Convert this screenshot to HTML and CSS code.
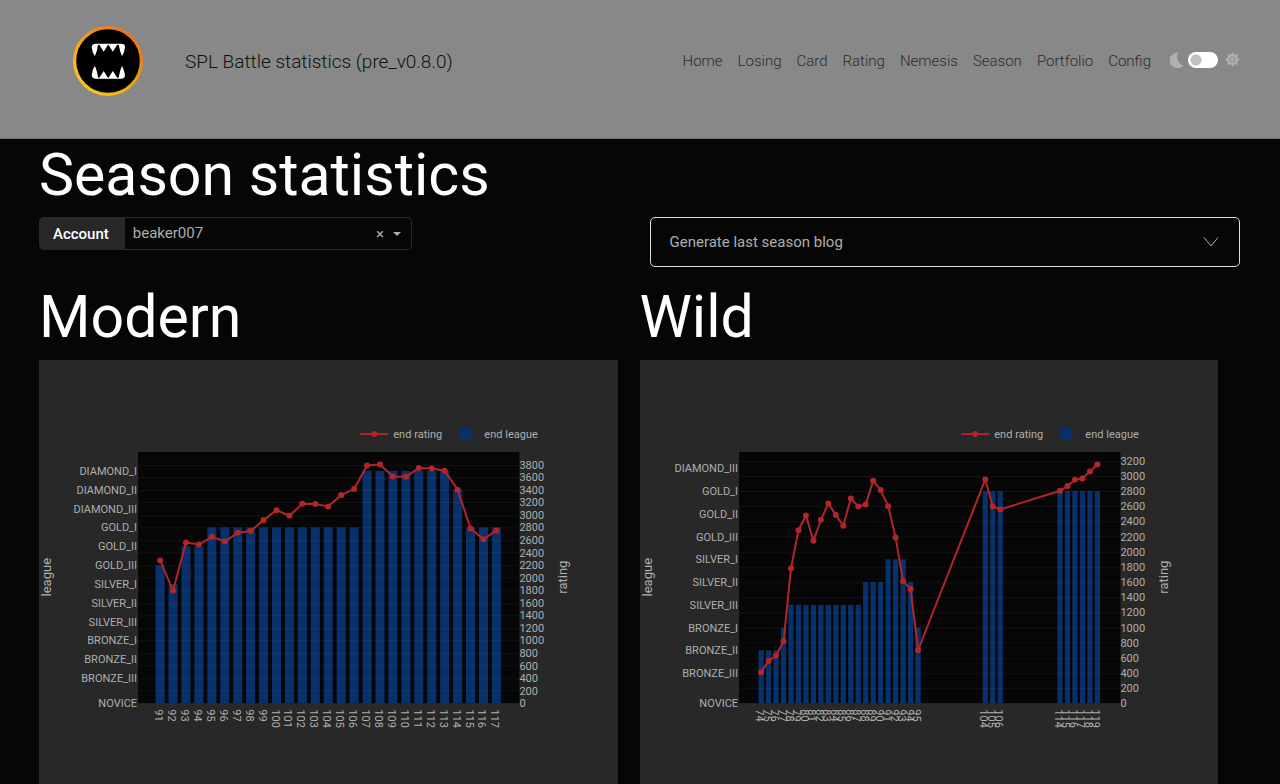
FILE: index.html
```html
<!DOCTYPE html>
<html lang="en">
<head>
<meta charset="utf-8">
<meta name="viewport" content="width=device-width, initial-scale=1">
<title>SPL Battle statistics</title>
<link rel="stylesheet" href="styles.css">
</head>
<body>
<header class="topbar">
  <svg class="logo" viewBox="0 0 70 70" aria-hidden="true">
    <defs>
      <linearGradient id="ring" x1="0.1" y1="0.9" x2="0.8" y2="0.1">
        <stop offset="0" stop-color="#fdca14"/>
        <stop offset="1" stop-color="#e9781c"/>
      </linearGradient>
    </defs>
    <circle cx="35" cy="35" r="33.4" fill="#000" stroke="url(#ring)" stroke-width="3.2"/>
    <path fill="#fff" d="M18.700 21Q19 17.700 23 17.700H48Q52 17.700 52 21Q51.500 26 49 30.300Q47 26 45.800 19L44.200 18.700L39.800 25.700L35.500 18.700H35L30.700 25.700L26.300 18.700L25 19Q24 26 21.800 30.300Q19 26 18.700 21Z"/>
    <path fill="#fff" d="M18.700 49.300Q19 52.700 23 52.700H48Q52 52.700 52 49.300Q51.500 44 49 40Q47 44 45.800 51.400L44.200 51.700L39.800 45L35.500 51.700H35L30.700 45L26.300 51.700L25 51.400Q24 44 21.800 40Q19 44 18.700 49.300Z"/>
  </svg>
  <span class="brand">SPL Battle statistics (pre_v0.8.0)</span>
  <nav class="nav">
    <a href="#">Home</a>
    <a href="#">Losing</a>
    <a href="#">Card</a>
    <a href="#">Rating</a>
    <a href="#">Nemesis</a>
    <a href="#">Season</a>
    <a href="#">Portfolio</a>
    <a href="#">Config</a>
  </nav>
  <div class="theme">
    <svg class="moon" viewBox="0 0 16 18" aria-hidden="true"><path d="M9.500 0.500A9 9 0 1 0 15.500 15.200A10 10 0 0 1 9.500 0.500Z"/></svg>
    <input class="switch" type="checkbox" role="switch" aria-label="Light theme">
    <svg class="sun" viewBox="0 0 16 16" aria-hidden="true"><path fill-rule="evenodd" d="M8 0L9.700 2.900L13.300 2.200L13 5.800L16 8L13 10.200L13.300 13.800L9.700 13.100L8 16L6.300 13.100L2.700 13.800L3 10.200L0 8L3 5.800L2.700 2.200L6.300 2.900ZM8 4.700A3.300 3.300 0 1 0 8 11.300A3.300 3.300 0 1 0 8 4.700Z"/><circle cx="8" cy="8" r="2.400"/></svg>
  </div>
</header>

<main class="page">
  <h1 class="heading">Season statistics</h1>
  <div class="columns controls">
    <div class="account">
      <label class="account-label" for="account">Account</label>
      <div class="account-box">
        <select class="account-select" id="account"><option>beaker007</option></select>
        <button class="clear" type="button" aria-label="Clear account">×</button>
        <svg class="caret" viewBox="0 0 8 4" aria-hidden="true"><path d="M0 0H8L4 4Z"/></svg>
      </div>
    </div>
    <button class="accordion" type="button" aria-expanded="false">
      <span>Generate last season blog</span>
      <svg class="chevron" viewBox="0 0 16 16" aria-hidden="true"><path d="M1 3.500L8 12L15 3.500"/></svg>
    </button>
  </div>
  <div class="columns">
    <section>
      <h2 class="heading">Modern</h2>
      <div class="panel"><svg class="chart" id="modern" viewBox="0 0 578 450" role="img" aria-label="Modern rating and league per season"></svg></div>
    </section>
    <section>
      <h2 class="heading">Wild</h2>
      <div class="panel"><svg class="chart" id="wild" viewBox="0 0 578 450" role="img" aria-label="Wild rating and league per season"></svg></div>
    </section>
  </div>
</main>
<script src="charts.js"></script>
</body>
</html>
```

FILE: styles.css
```css
* { box-sizing: border-box; }

body {
  margin: 0;
  background: #060606;
  color: #fff;
  font-family: Roboto, "Liberation Sans", sans-serif;
  font-size: 15px;
}

.topbar {
  display: flex;
  align-items: center;
  padding: 26px 40px 42px 73px;
  background: #888;
  border-bottom: 1px solid #777;
}
.logo { width: 70px; height: 70px; flex: none; }
.brand { margin-left: 42px; color: #111; font-size: 19px; font-weight: 300; }
.nav { display: flex; gap: 15px; margin-left: auto; }
.nav a { color: #2c2c2c; font-weight: 300; text-decoration: none; }

.theme { display: flex; align-items: center; gap: 4px; margin-left: 19px; padding-bottom: 3px; }
.theme svg { fill: #b0b0b0; }
.moon { width: 14px; height: 16px; }
.sun { width: 15px; height: 15px; margin-left: 3px; }
.switch {
  appearance: none;
  width: 30px;
  height: 16px;
  margin: 0;
  border-radius: 8px;
  background: radial-gradient(circle at 8px 8px, #c0c0c0 5px, #fff 6px);
}

.page { padding: 0 40px 0 39px; }
.heading { margin: 0; font-size: 59px; line-height: 72px; font-weight: 400; }
.columns { display: grid; grid-template-columns: 1fr 1fr; }
.controls { align-items: start; margin: 6px 0 14px; }

.account { display: flex; width: 373px; height: 33px; }
.account-label {
  display: flex;
  align-items: center;
  padding: 0 15px 0 14px;
  background: #282828;
  border-radius: 5px 0 0 5px;
  font-weight: 500;
}
.account-box {
  display: flex;
  flex: 1;
  align-items: center;
  padding: 0 10px 0 8px;
  border: 1px solid #282828;
  border-radius: 0 4px 4px 0;
}
.account-select {
  appearance: none;
  flex: 1;
  padding: 0 0 2px;
  border: 0;
  background: transparent;
  color: #adafae;
  font: inherit;
}
.clear {
  padding: 0 9px;
  border: 0;
  background: none;
  color: #adafae;
  font: inherit;
}
.caret { width: 8px; height: 4px; fill: #adafae; }

.accordion {
  display: flex;
  align-items: center;
  justify-content: space-between;
  height: 50px;
  margin-left: 10px;
  padding: 0 20px 0 19px;
  border: 1px solid #ddd;
  border-radius: 5px;
  background: transparent;
  color: #adafae;
  font: inherit;
}
.chevron { width: 16px; height: 16px; fill: none; stroke: #adafae; }

.panel { margin: 7px 22px 0 0; background: #282828; }
.chart { display: block; width: 100%; fill: #adafae; font-size: 11px; }
.chart .plot { fill: #060606; }
.chart .grid { stroke: #fff; stroke-opacity: 0.05; }
.chart .bar { fill: #08306b; }
.chart .line { fill: none; stroke: #b0262a; stroke-width: 2; }
.chart .dot { fill: #b0262a; }
.chart .axis-title { font-size: 13px; text-anchor: middle; }
.chart .league { text-anchor: end; }
```

FILE: charts.js
```js
const LEAGUES = ['BRONZE_III', 'BRONZE_II', 'BRONZE_I', 'SILVER_III', 'SILVER_II', 'SILVER_I',
  'GOLD_III', 'GOLD_II', 'GOLD_I', 'DIAMOND_III', 'DIAMOND_II', 'DIAMOND_I'];
const PLOT = { left: 99, right: 480, top: 92, bottom: 343 };

function node(parent, name, attrs, text) {
  const el = document.createElementNS('http://www.w3.org/2000/svg', name);
  for (const key in attrs) el.setAttribute(key, attrs[key]);
  if (text !== undefined) el.textContent = text;
  parent.appendChild(el);
}

// rows: [season, end rating, league threshold]
function draw(id, rows, topTick, topLeague, perPoint) {
  const svg = document.getElementById(id);
  const first = rows[0][0];
  const step = 336 / (rows[rows.length - 1][0] - first);
  const x = season => 121 + (season - first) * step;
  const y = value => PLOT.bottom - value * perPoint;

  node(svg, 'rect', { class: 'plot', x: PLOT.left, y: PLOT.top, width: PLOT.right - PLOT.left, height: PLOT.bottom - PLOT.top });
  for (const [season, , league] of rows) {
    node(svg, 'rect', { class: 'bar', x: x(season) - step * 0.35, y: y(league), width: step * 0.7, height: league * perPoint });
  }
  for (let v = 0; v <= topTick; v += 200) {
    node(svg, 'path', { class: 'grid', d: `M${PLOT.left} ${Math.round(y(v)) + 0.5}H${PLOT.right}` });
    node(svg, 'text', { x: PLOT.right, y: y(v) + 4 }, v);
  }
  node(svg, 'text', { class: 'league', x: PLOT.left - 1, y: y(0) + 4 }, 'NOVICE');
  for (let i = 0; i <= topLeague; i++) {
    node(svg, 'text', { class: 'league', x: PLOT.left - 1, y: y(400 + 300 * i) + 4 }, LEAGUES[i]);
  }
  node(svg, 'polyline', { class: 'line', points: rows.map(r => `${x(r[0])},${y(r[1])}`).join(' ') });
  for (const [season, rating] of rows) {
    node(svg, 'circle', { class: 'dot', cx: x(season), cy: y(rating), r: 3 });
    node(svg, 'text', { transform: `translate(${x(season) - 5} 349) rotate(90)` }, season);
  }

  node(svg, 'path', { class: 'line', d: 'M321 74H349' });
  node(svg, 'circle', { class: 'dot', cx: 335, cy: 74, r: 3 });
  node(svg, 'text', { x: 354, y: 78 }, 'end rating');
  node(svg, 'rect', { class: 'bar', x: 420, y: 68, width: 12, height: 12 });
  node(svg, 'text', { x: 445, y: 78 }, 'end league');
  node(svg, 'text', { class: 'axis-title', transform: 'translate(12 217) rotate(-90)' }, 'league');
  node(svg, 'text', { class: 'axis-title', transform: 'translate(528 217) rotate(-90)' }, 'rating');
}

draw('modern', [
  [91, 2274, 2200], [92, 1795, 1900], [93, 2560, 2500], [94, 2528, 2500], [95, 2650, 2800],
  [96, 2576, 2800], [97, 2714, 2800], [98, 2741, 2800], [99, 2916, 2800], [100, 3075, 2800],
  [101, 2985, 2800], [102, 3176, 2800], [103, 3171, 2800], [104, 3134, 2800], [105, 3314, 2800],
  [106, 3410, 2800], [107, 3787, 3700], [108, 3803, 3700], [109, 3612, 3700], [110, 3606, 3700],
  [111, 3744, 3700], [112, 3739, 3700], [113, 3702, 3700], [114, 3399, 3400], [115, 2783, 2800],
  [116, 2613, 2800], [117, 2751, 2800]
], 3800, 11, 0.06276);

draw('wild', [
  [74, 409, 700], [75, 559, 700], [76, 630, 700], [77, 819, 1000], [78, 1779, 1300],
  [79, 2285, 1300], [80, 2479, 1300], [81, 2144, 1300], [82, 2422, 1300], [83, 2638, 1300],
  [84, 2484, 1300], [85, 2343, 1300], [86, 2704, 1300], [87, 2598, 1300], [88, 2624, 1600],
  [89, 2937, 1600], [90, 2814, 1600], [91, 2602, 1900], [92, 2188, 1900], [93, 1612, 1900],
  [94, 1510, 1600], [95, 700, 1000], [104, 2955, 2800], [105, 2598, 2800], [106, 2558, 2800],
  [114, 2805, 2800], [115, 2867, 2800], [116, 2950, 2800], [117, 2968, 2800], [118, 3060, 2800],
  [119, 3153, 2800]
], 3200, 9, 0.0757);
```
